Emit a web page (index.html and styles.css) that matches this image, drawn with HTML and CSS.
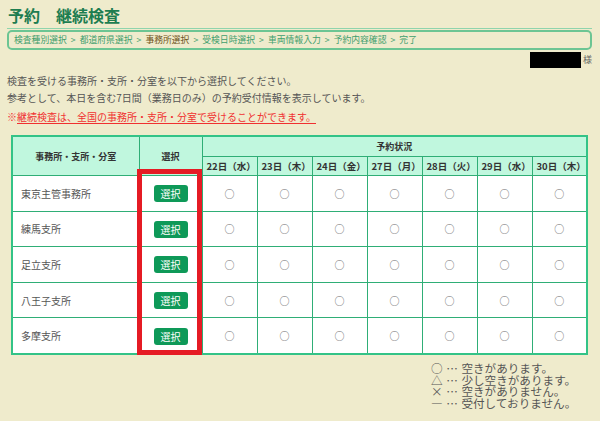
FILE: index.html
```html
<!DOCTYPE html>
<html lang="ja">
<head>
<meta charset="utf-8">
<title>予約 継続検査</title>
<link rel="stylesheet" href="styles.css">
</head>
<body>
<h1 class="title">予約　継続検査</h1>
<div class="crumbs">
  <span>検査種別選択</span><span class="sep">&gt;</span><span>都道府県選択</span><span class="sep">&gt;</span><span class="cur">事務所選択</span><span class="sep">&gt;</span><span>受検日時選択</span><span class="sep">&gt;</span><span>車両情報入力</span><span class="sep">&gt;</span><span>予約内容確認</span><span class="sep">&gt;</span><span>完了</span>
</div>
<div class="user"><span class="name"></span><span class="sama">様</span></div>
<p class="intro">検査を受ける事務所・支所・分室を以下から選択してください。<br>参考として、本日を含む7日間（業務日のみ）の予約受付情報を表示しています。</p>
<p class="note">※<span class="ul">継続検査は、全国の事務所・支所・分室で受けることができます。</span></p>
<div class="tablewrap">
  <table class="sched">
    <colgroup>
      <col class="c-office"><col class="c-sel"><col class="c-day"><col class="c-day"><col class="c-day"><col class="c-day"><col class="c-day"><col class="c-day"><col class="c-day">
    </colgroup>
    <thead>
      <tr class="h1r"><th rowspan="2">事務所・支所・分室</th><th rowspan="2">選択</th><th colspan="7">予約状況</th></tr>
      <tr class="h2r"><th class="d">22日（水）</th><th class="d">23日（木）</th><th class="d">24日（金）</th><th class="d">27日（月）</th><th class="d">28日（火）</th><th class="d">29日（水）</th><th class="d">30日（木）</th></tr>
    </thead>
    <tbody>
      <tr><td class="off">東京主管事務所</td><td class="sel"><span class="btn">選択</span></td><td>○</td><td>○</td><td>○</td><td>○</td><td>○</td><td>○</td><td>○</td></tr>
      <tr><td class="off">練馬支所</td><td class="sel"><span class="btn">選択</span></td><td>○</td><td>○</td><td>○</td><td>○</td><td>○</td><td>○</td><td>○</td></tr>
      <tr><td class="off">足立支所</td><td class="sel"><span class="btn">選択</span></td><td>○</td><td>○</td><td>○</td><td>○</td><td>○</td><td>○</td><td>○</td></tr>
      <tr><td class="off">八王子支所</td><td class="sel"><span class="btn">選択</span></td><td>○</td><td>○</td><td>○</td><td>○</td><td>○</td><td>○</td><td>○</td></tr>
      <tr><td class="off">多摩支所</td><td class="sel"><span class="btn">選択</span></td><td>○</td><td>○</td><td>○</td><td>○</td><td>○</td><td>○</td><td>○</td></tr>
    </tbody>
  </table>
  <div class="highlight"></div>
</div>
<div class="legend">
  <div class="lg">○ … 空きがあります。</div>
  <div class="lg">△ … 少し空きがあります。</div>
  <div class="lg">× … 空きがありません。</div>
  <div class="lg">― … 受付しておりません。</div>
</div>
</body>
</html>
```

FILE: styles.css
```css
html, body {
  margin: 0;
  padding: 0;
  background: #efebcc;
}
body {
  font-family: "Noto Sans CJK JP", "Noto Sans", sans-serif;
  color: #555;
  padding: 0 8px 0 7px;
  width: 585px;
}
.title {
  margin: 0;
  padding: 4px 0 0 1px;
  font-size: 16px;
  line-height: 22px;
  font-weight: bold;
  color: #1d7d50;
  border-bottom: 1px solid #8fd4ac;
  box-sizing: border-box;
  height: 29px;
}
.crumbs {
  margin-top: 1px;
  height: 20px;
  box-sizing: border-box;
  border: 2px solid #6cc593;
  border-radius: 5px;
  padding: 0 0 0 5px;
  font-size: 8.8px;
  line-height: 16px;
  color: #3f9e6d;
  white-space: nowrap;
}
.crumbs .sep {
  margin: 0 4px;
}
.crumbs .cur {
  color: #6e5320;
}
.user {
  display: flex;
  justify-content: flex-end;
  align-items: center;
  height: 17px;
  margin-top: 1px;
  font-size: 9px;
  color: #666;
}
.user .name {
  width: 51px;
  height: 16px;
  background: #000;
}
.user .sama {
  margin-left: 2px;
}
.intro {
  margin: 4px 0 0 0;
  font-size: 10px;
  line-height: 17px;
  color: #555;
}
.note {
  margin: 4px 0 0 0;
  font-size: 10px;
  line-height: 14px;
  color: #f03030;
}
.note .ul {
  text-decoration: underline;
  text-underline-offset: 2px;
}
.tablewrap {
  position: relative;
  margin: 11px 0 0 4px;
  width: 577px;
}
.sched {
  width: 577px;
  border-collapse: collapse;
  border: 2px solid #33c387;
  background: #fff;
  table-layout: fixed;
}
.c-office { width: 127px; }
.c-sel { width: 63px; }
.c-day { width: 55px; }
.sched th, .sched td {
  border: 1px solid #2fae76;
  padding: 0;
}
.sched th {
  background: #c0f7de;
  font-size: 9px;
  font-weight: bold;
  color: #333;
}
.h1r th { height: 19px; }
.h2r th { height: 18px; }
.sched th.d {
  text-align: left;
  padding-left: 4px;
  font-size: 9.5px;
}
.sched td {
  height: 34.6px;
  text-align: center;
  font-size: 10px;
  color: #666;
}
.sched td.off {
  text-align: left;
  padding-left: 8px;
  color: #555;
}
.btn {
  display: inline-block;
  width: 34px;
  height: 17px;
  line-height: 17px;
  background: #0e9958;
  color: #fff;
  border-radius: 3px;
  font-size: 10px;
  vertical-align: middle;
}
.highlight {
  position: absolute;
  left: 126px;
  top: 34px;
  width: 65px;
  height: 186px;
  box-sizing: border-box;
  border: 5px solid #e51b24;
  pointer-events: none;
}
.legend {
  margin: 8px 0 0 424px;
  font-size: 11.6px;
  color: #555;
  white-space: nowrap;
  word-spacing: 1px;
}
.lg {
  height: 11.7px;
  line-height: 11.7px;
}
```
